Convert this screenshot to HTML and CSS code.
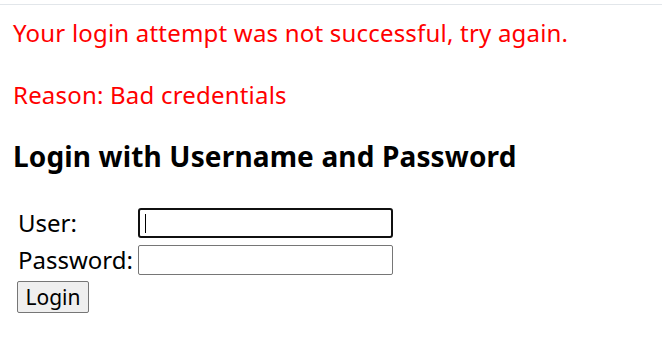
FILE: index.html
```html
<!DOCTYPE html>
<html>
<head>
<meta charset="utf-8">
<title>Login Page</title>
<link rel="stylesheet" href="styles.css">
</head>
<body>
<div class="topline"></div>
<p class="error">Your login attempt was not successful, try again.<br><br>Reason: Bad credentials</p>
<h3 class="title">Login with Username and Password</h3>
<form class="login" action="#" onsubmit="return false;">
  <div class="fields">
    <label class="label" for="username">User:</label>
    <span class="field-wrap">
      <input class="field field-focused" id="username" type="text" name="username">
      <span class="caret"></span>
    </span>
    <label class="label" for="password">Password:</label>
    <span class="field-wrap">
      <input class="field" id="password" type="password" name="password">
    </span>
  </div>
  <button class="submit" type="submit">Login</button>
</form>
</body>
</html>
```

FILE: styles.css
```css
html, body {
  margin: 0;
  padding: 0;
  background: #ffffff;
}

body {
  font-family: "Noto Sans", "Liberation Sans", sans-serif;
  font-size: 24px;
  color: #000000;
  padding: 4px 12px 0 12px;
}

.topline {
  height: 0;
  border-top: 1px solid #e2e6ea;
  margin: 0 -12px;
}

.error {
  color: #ff0000;
  line-height: 31px;
  letter-spacing: 0.2px;
  margin: 12px 0 0 1px;
}

.title {
  font-size: 28px;
  font-weight: bold;
  line-height: 37px;
  letter-spacing: 0.15px;
  margin: 28px 0 0 1px;
}

.login {
  margin: 33px 0 0 0;
}

.fields {
  display: grid;
  grid-template-columns: 120px 255px;
  row-gap: 7px;
  padding-left: 6px;
}

.label {
  line-height: 30px;
  height: 30px;
}

.field-wrap {
  position: relative;
  display: block;
  height: 30px;
}

.field {
  box-sizing: border-box;
  display: block;
  width: 255px;
  height: 30px;
  margin: 0;
  padding: 0 6px;
  border: 1px solid #767676;
  border-radius: 2px;
  background: #ffffff;
  outline: none;
  font-family: "Noto Sans", "Liberation Sans", sans-serif;
  font-size: 20px;
}

.field-focused {
  border: 2px solid #101010;
  border-radius: 3px;
}

.caret {
  position: absolute;
  left: 7px;
  top: 6px;
  width: 1px;
  height: 19px;
  background: #000000;
}

.submit {
  display: block;
  box-sizing: border-box;
  margin: 6px 0 0 5px;
  width: 72px;
  height: 32px;
  padding: 0;
  border: 1px solid #767676;
  border-radius: 2px;
  background: #efefef;
  color: #000000;
  font-family: "Noto Sans", "Liberation Sans", sans-serif;
  font-size: 21px;
  line-height: 28px;
}
```
